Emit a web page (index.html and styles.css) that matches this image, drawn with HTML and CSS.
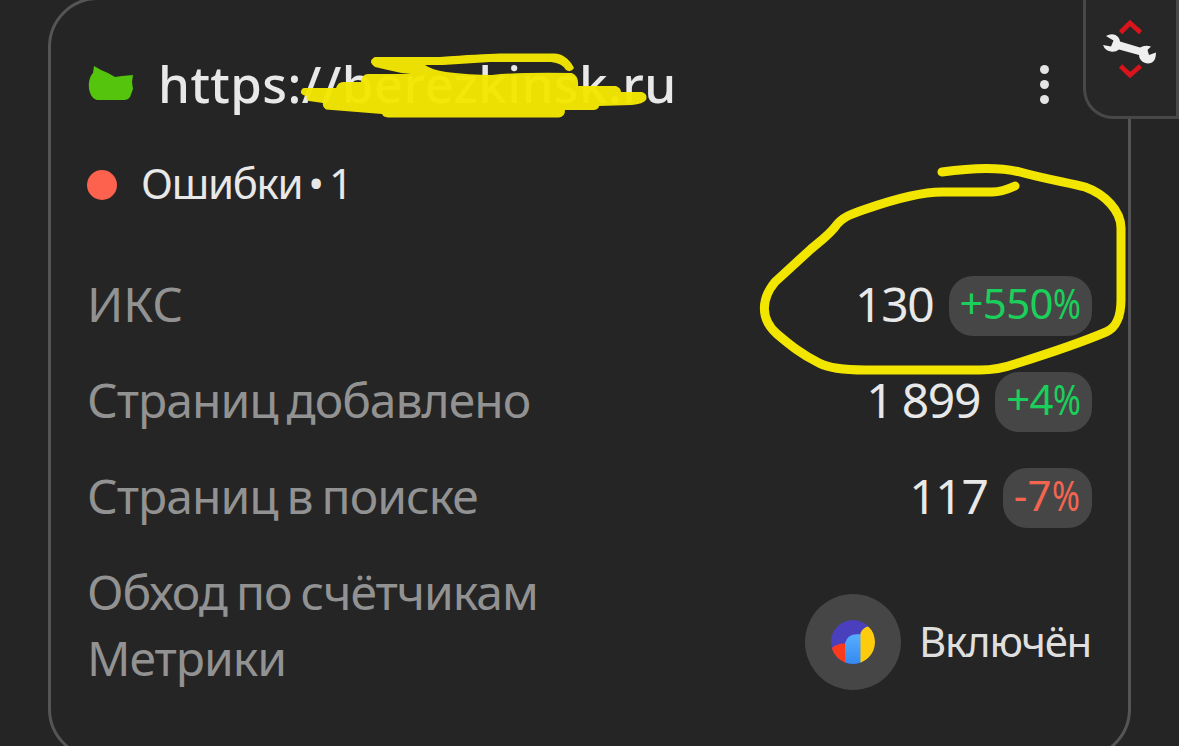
FILE: index.html
```html
<!DOCTYPE html>
<html lang="ru">
<head>
  <meta charset="UTF-8" />
  <meta name="viewport" content="width=device-width, initial-scale=1.0" />
  <title>Сайты</title>
  <link rel="stylesheet" href="styles.css">
</head>
<body>
  <div class="card">
    <div class="header">
      <svg class="favicon" viewBox="0 0 46 36" width="46" height="36">
        <path fill="#54c40d" d="M6 0 L13 4 L20 7 L27 11 L34 10 L45 9 L44 16 L45 23 L42 31 Q40 34 36 34 H9 Q5 33 3 29 Q0 23 1 16 Q2 10 5 7 Z"/>
      </svg>
      <div class="title">https://berezkinsk.ru</div>
      <div class="menu"><i></i><i></i><i></i></div>
    </div>

    <div class="status">
      <span class="status-dot"></span>
      <span class="status-text">Ошибки • 1</span>
    </div>

    <div class="rows">
      <div class="row">
        <div class="label label-iks">ИКС</div>
        <div class="value">130</div>
        <div class="badge up">+550<span class="percent">%</span></div>
      </div>
      <div class="row">
        <div class="label">Страниц добавлено</div>
        <div class="value">1 899</div>
        <div class="badge up">+4<span class="percent">%</span></div>
      </div>
      <div class="row">
        <div class="label">Страниц в поиске</div>
        <div class="value">117</div>
        <div class="badge down">-7<span class="percent">%</span></div>
      </div>
      <div class="row">
        <div class="label">Обход по счётчикам<br>Метрики</div>
        <div class="metrika">
          <svg viewBox="0 0 44 44" width="44" height="44">
            <defs>
              <clipPath id="round"><circle cx="22" cy="22" r="22"/></clipPath>
              <linearGradient id="blue" x1="0" y1="0" x2="0" y2="1">
                <stop offset="0" stop-color="#57aeff"/>
                <stop offset="1" stop-color="#3489ef"/>
              </linearGradient>
            </defs>
            <g clip-path="url(#round)">
              <path fill="#4a40bd" d="M0 0 H37 V10 L30 44 H0 Z"/>
              <path fill="#fb3b1c" d="M0 29 Q5 23 15 23.500 V44 H0 Z"/>
              <path fill="url(#blue)" d="M14 44 V23 Q16.500 14.500 26 14.300 H30.500 V44 Z"/>
              <path fill="#ffcb0d" d="M29.500 44 V13 Q32 7.500 37 6.500 Q44 10 44 22 V44 Z"/>
            </g>
          </svg>
        </div>
        <div class="state">Включён</div>
      </div>
    </div>
  </div>

  <!-- Tools tab in the page corner -->
  <div class="tools">
    <svg viewBox="0 0 56 64" width="56" height="64">
      <g fill="none" stroke="#d9141b" stroke-width="4.800">
        <path d="M17.500 14.500 L27 5 L37.500 14.500"/>
        <path d="M17.500 48 L27 57 L37.500 48"/>
      </g>
      <path fill="#efefef" d="M3 18 Q8 15 12.500 17 Q16.500 19 17 23.500 L37 29.500 Q42 26.500 48 28.500 L44.500 32 L46 37 L53 34.500 Q53 42 49 44.500 Q44 46.500 40 44 Q36 41 36 37 L16 31.500 Q13 34 9 33.800 Q2 33 0 27 L8 28.500 L10.500 22.500 Z"/>
    </svg>
  </div>

  <!-- Marker strokes -->
  <svg class="marker" viewBox="0 0 1179 746" width="1179" height="746">
    <path class="fill" d="M304 88 H336 Q338 82 343 82 H361 Q362 74 368 74 H411 Q399 73 388 70 L375 67 Q367 61 375 57 H440 Q480 54 500 53.500 H554 Q567 54 574 68 Q571 73 566 70 Q562 63 551 62 H490 L443 65 H425 Q432 70 446 72 Q470 75 492 75 Q520 72 572 73 Q579 76 578 86 H616 Q621 88 621 92 H642 Q648 94 646 100 Q643 104 632 105 L599 106 Q599 109 594 110 H565 Q565 117 559 117.500 H388 Q383 117 382 114 L326 109.500 Q322 107 323 103 L309 101 Q305 99 307 96 Q300 95 301 91 Q302 88 304 88 Z"/>
    <path class="line" d="M942 172 C970 168 1000 167 1020 172 C1045 179 1070 183 1085 187 C1105 194 1121 211 1121 228 V300 C1121 316 1116 328 1106 332 C1080 343 1047 354 1015 364 Q998 370 980 370 H865 Q832 370 819 363 C801 354 790 345 777 334 C760 319 761 299 775 282 L811 249 C819 242 828 236 835 227 C842 217 851 214 866 209 Q915 192 942 192 H992 Q1002 192 1015 186"/>
  </svg>
</body>
</html>
```
FILE: styles.css
```css
html, body {
  margin: 0;
  padding: 0;
  height: 746px;
  overflow: hidden;
}
body {
  position: relative;
  background: #252525;
  color: #e8e8e8;
  font-family: "Noto Sans", "Open Sans", sans-serif;
}
.card {
  box-sizing: border-box;
  width: 1083px;
  height: 762px;
  margin: -3px 0 0 48px;
  padding: 51px 36px 0;
  border: 3px solid #555555;
  border-radius: 50px;
}
.header {
  display: flex;
  align-items: center;
  height: 66px;
}
.favicon {
  margin-left: 1px;
}
.title {
  margin-left: 24px;
  padding-bottom: 2px;
  font-size: 51px;
  font-weight: 500;
  line-height: 64px;
  letter-spacing: 0.4px;
  white-space: nowrap;
}
.menu {
  display: flex;
  flex-direction: column;
  gap: 6px;
  margin-left: auto;
  margin-right: 43px;
}
.menu i {
  width: 9px;
  height: 9px;
  border-radius: 50%;
  background: #e4e4e4;
}
.status {
  display: flex;
  align-items: center;
  gap: 24px;
  height: 60px;
  margin-top: 36px;
}
.status-dot {
  width: 30px;
  height: 30px;
  margin-top: 4px;
  border-radius: 50%;
  background: #fc624d;
}
.status-text {
  font-size: 42px;
  line-height: 60px;
  letter-spacing: -1.3px;
  word-spacing: -3.5px;
}
.rows {
  display: flex;
  flex-direction: column;
  gap: 31px;
  margin-top: 58px;
}
.row {
  display: flex;
  align-items: flex-end;
}
.label {
  flex: 1;
  margin-bottom: -1px;
  font-size: 48px;
  line-height: 66px;
  letter-spacing: -1px;
  word-spacing: -2.5px;
  color: #929292;
}
.label-iks {
  letter-spacing: 0;
}
.value {
  margin-bottom: -1px;
  font-size: 48px;
  line-height: 66px;
  letter-spacing: -1.3px;
  word-spacing: -2px;
}
.badge {
  box-sizing: border-box;
  height: 60px;
  margin-left: 15px;
  padding: 0 12px 0 11px;
  border-radius: 24px;
  background: #464646;
  font-size: 42px;
  line-height: 53px;
  letter-spacing: -0.7px;
}
.percent {
  display: inline-block;
  margin-right: -7px;
  transform: scaleX(0.8);
  transform-origin: left;
}
.up {
  color: #1bcf5b;
}
.down {
  color: #f4654f;
  letter-spacing: 0.3px;
}
.metrika {
  display: flex;
  align-items: center;
  justify-content: center;
  width: 96px;
  height: 96px;
  border-radius: 50%;
  background: #464646;
}
.state {
  margin-left: 18px;
  padding: 0 1px 3px 0;
  font-size: 42px;
  line-height: 93px;
  letter-spacing: -1.3px;
  color: #dfdfdf;
}

/* Tools tab */
.tools {
  position: absolute;
  top: 0;
  right: 0;
  box-sizing: border-box;
  width: 96px;
  height: 119px;
  padding: 18px 0 0 17px;
  border: 3px solid #484848;
  border-top: none;
  border-bottom-left-radius: 30px;
  background: #272727;
}

/* Marker strokes over the card */
.marker {
  position: absolute;
  top: 0;
  left: 0;
}
.marker .fill {
  fill: #f2e600;
  fill-opacity: 0.97;
}
.marker .line {
  fill: none;
  stroke: #f2e600;
  stroke-width: 9;
  stroke-linecap: round;
  stroke-linejoin: round;
}
```
